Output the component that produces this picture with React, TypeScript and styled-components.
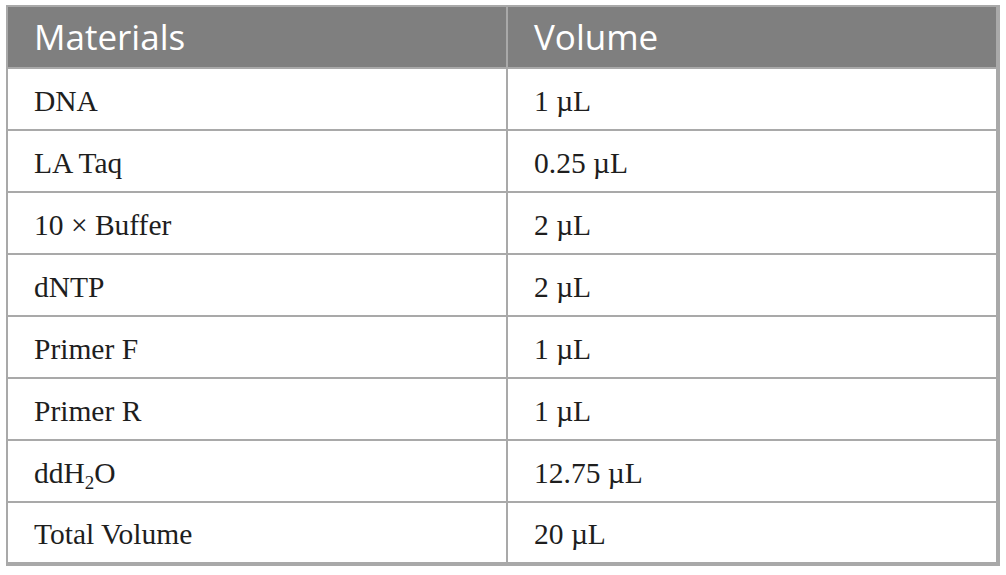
import * as React from "react";
import styled, { createGlobalStyle } from "styled-components";

const GlobalStyle = createGlobalStyle`
  html, body {
    margin: 0;
    padding: 0;
    background: #ffffff;
  }
`;

const Page = styled.div`
  padding: 5px 6px;
  width: 1006px;
  box-sizing: border-box;
`;

const Table = styled.table`
  width: 994px;
  border-collapse: collapse;
  table-layout: fixed;
  border-top: 2px solid #a9a9a9;
  border-left: 2px solid #a9a9a9;
  border-right: 4px solid #a9a9a9;
  border-bottom: 4px solid #a9a9a9;
`;

const HeadCell = styled.th`
  background: #7f7f7f;
  color: #ffffff;
  font-family: "Open Sans", "Lato", sans-serif;
  font-weight: 400;
  font-size: 35px;
  text-align: left;
  height: 62px;
  padding: 0 0 2px 26px;
  border: 2px solid #a9a9a9;
  border-top: none;
  box-sizing: border-box;
`;

const Cell = styled.td`
  font-family: "Liberation Serif", "Times New Roman", serif;
  font-size: 29.5px;
  color: #1e1e1e;
  height: 62px;
  padding: 4px 0 0 26px;
  border: 2px solid #a9a9a9;
  vertical-align: middle;
  box-sizing: border-box;
`;

const Sub = styled.sub`
  font-size: 19px;
  line-height: 0;
  vertical-align: -6px;
`;

const rows: [React.ReactNode, string][] = [
  ["DNA", "1 µL"],
  ["LA Taq", "0.25 µL"],
  ["10 × Buffer", "2 µL"],
  ["dNTP", "2 µL"],
  ["Primer F", "1 µL"],
  ["Primer R", "1 µL"],
  [
    <>
      ddH<Sub>2</Sub>O
    </>,
    "12.75 µL",
  ],
  ["Total Volume", "20 µL"],
];

const App: React.FC = () => {
  return (
    <>
      <GlobalStyle />
      <Page>
        <Table>
          <colgroup>
            <col style={{ width: 500 }} />
            <col />
          </colgroup>
          <thead>
            <tr>
              <HeadCell>Materials</HeadCell>
              <HeadCell>Volume</HeadCell>
            </tr>
          </thead>
          <tbody>
            {rows.map(([material, volume], i) => (
              <tr key={i}>
                <Cell>{material}</Cell>
                <Cell>{volume}</Cell>
              </tr>
            ))}
          </tbody>
        </Table>
      </Page>
    </>
  );
};

export default App;
